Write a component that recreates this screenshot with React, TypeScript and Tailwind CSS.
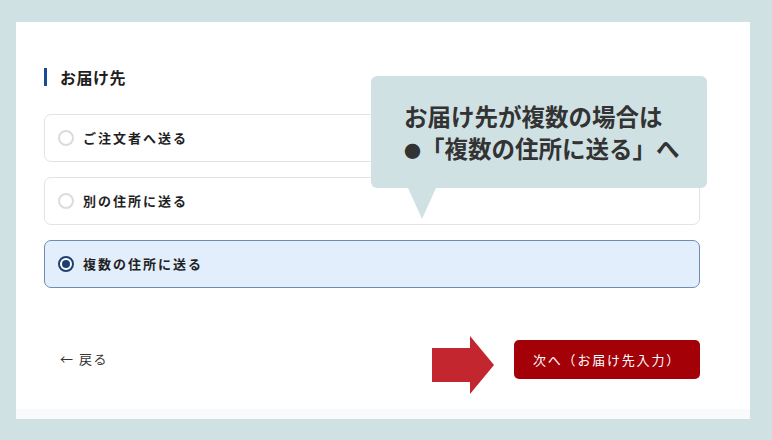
import React from "react";

const jp = { fontFamily: '"Noto Sans CJK JP", "Noto Sans", sans-serif' };

function Radio({ checked }: { checked?: boolean }) {
  if (checked) {
    return (
      <span className="flex h-[16px] w-[16px] items-center justify-center rounded-full border-2 border-[#1d3f73] bg-white">
        <span className="h-[8px] w-[8px] rounded-full bg-[#1d3f73]" />
      </span>
    );
  }
  return <span className="h-[16px] w-[16px] rounded-full border-2 border-[#dcdcdc] bg-white" />;
}

function Option({ label, checked }: { label: string; checked?: boolean }) {
  return (
    <div
      className={
        "flex h-[48px] items-center gap-[9px] rounded-[7px] border px-[13px] " +
        (checked ? "border-[#6f8db3] bg-[#e2eefb]" : "border-[#e3e3e3] bg-white")
      }
    >
      <Radio checked={checked} />
      <span className="text-[13px] font-bold tracking-[2px] text-[#1f1f1f]">{label}</span>
    </div>
  );
}

export default function App() {
  return (
    <div className="h-[440px] w-[772px] bg-[#d0e1e4] pt-[22px] pl-[16px]" style={jp}>
      <div className="relative w-[734px] bg-white">
        <div className="pt-[46px] pl-[28px] pr-[50px] pb-[15px]">
          <div className="flex h-[18px] items-center gap-[13px]">
            <span className="h-[18px] w-[3px] bg-[#1a4b98]" />
            <span className="text-[16px] font-bold leading-none tracking-[0.5px] text-[#1f1f1f]">お届け先</span>
          </div>
          <div className="mt-[28px] flex flex-col gap-[15px]">
            <Option label="ご注文者へ送る" />
            <Option label="別の住所に送る" />
            <Option label="複数の住所に送る" checked />
          </div>
          <div className="mt-[48px] flex items-start justify-between">
            <span className="mt-[13px] pl-[16px] text-[13px] tracking-[1.5px] text-[#333]">← 戻る</span>
            <div className="flex items-start gap-[20px]">
              <svg width="62" height="58" viewBox="0 0 62 58">
                <path d="M0 12 H38 V0 L62 29 L38 58 V46 H0 Z" fill="#c3262e" />
              </svg>
              <div className="mt-[4px] flex h-[39px] w-[186px] items-center justify-center rounded-[5px] bg-[#a30008] text-[13px] tracking-[1.8px] text-white">
                次へ（お届け先入力）
              </div>
            </div>
          </div>
        </div>
        <div className="h-[10px] bg-[#f8fafb]" />

        <div className="absolute left-[355px] top-[54px] h-[112px] w-[336px] rounded-[6px] bg-[#d0e1e4] pl-[33px] pt-[24px]">
          <div className="text-[23.5px] font-bold leading-[32px] text-[#333]">
            <div>お届け先が複数の場合は</div>
            <div>
              <span className="text-[17px]">●</span>「複数の住所に送る」へ
            </div>
          </div>
          <svg className="absolute left-[37px] top-[112px]" width="28" height="31" viewBox="0 0 28 31">
            <path d="M0 0 H28 L14 31 Z" fill="#d0e1e4" />
          </svg>
        </div>
      </div>
    </div>
  );
}
